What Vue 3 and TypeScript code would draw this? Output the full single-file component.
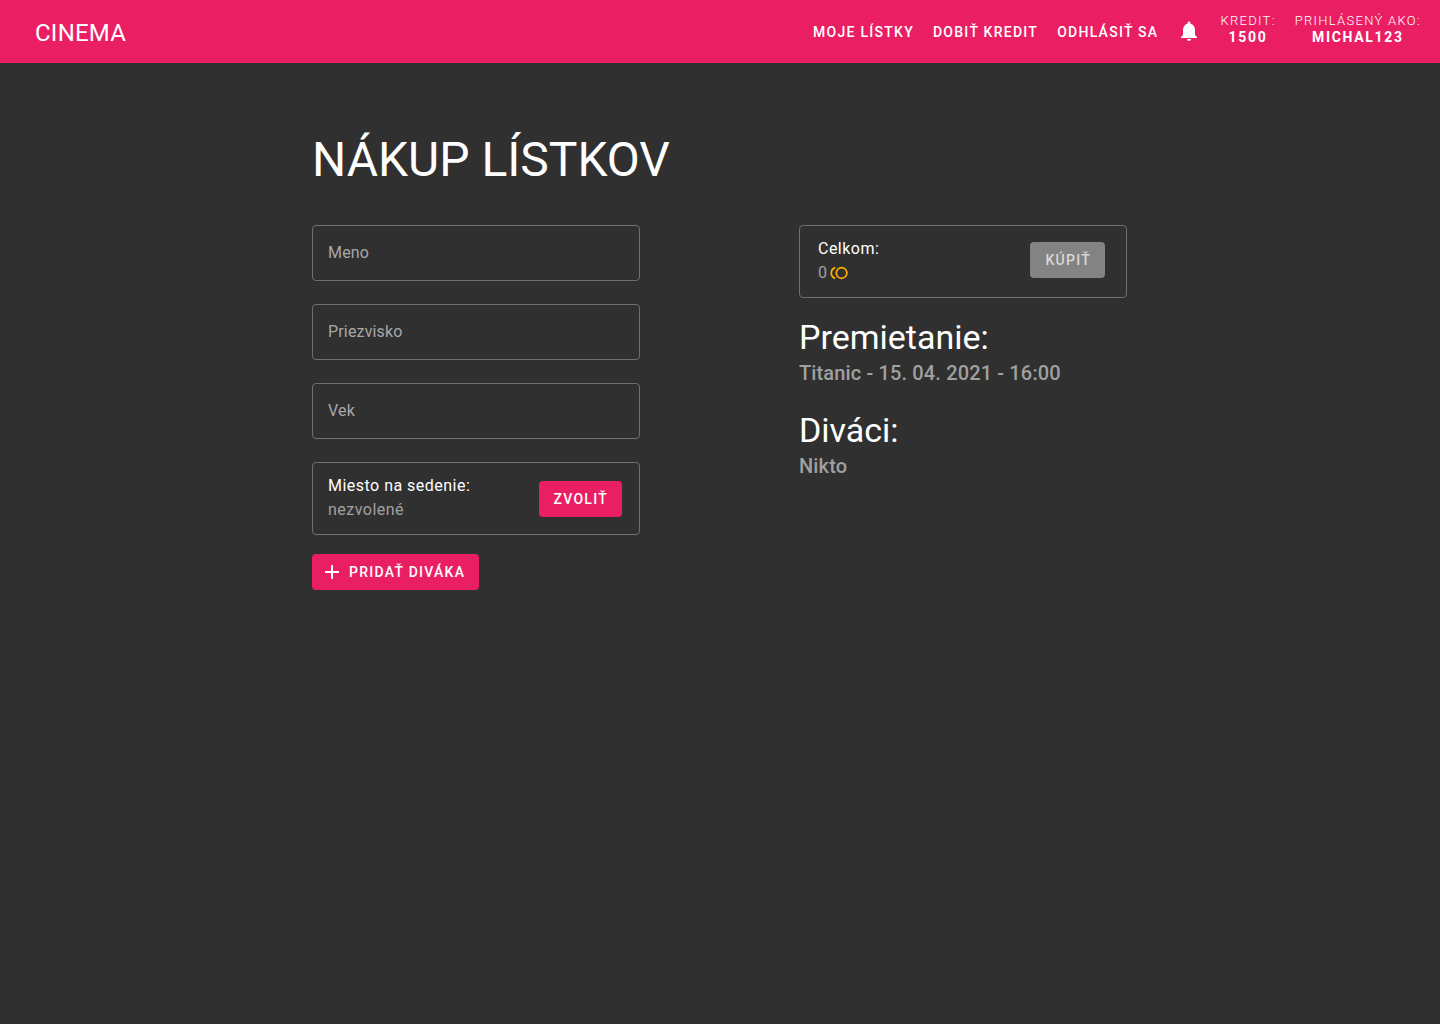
<script setup lang="ts">
import { computed, reactive, ref } from 'vue'

interface Field {
  id: 'firstName' | 'lastName' | 'age'
  label: string
}

const fields: Field[] = [
  { id: 'firstName', label: 'Meno' },
  { id: 'lastName', label: 'Priezvisko' },
  { id: 'age', label: 'Vek' },
]

const links: string[] = ['Moje lístky', 'Dobiť kredit', 'Odhlásiť sa']

const form = reactive<Record<Field['id'], string>>({ firstName: '', lastName: '', age: '' })
const viewers = ref<string[]>([])
const total = ref(0)
const viewerList = computed(() => viewers.value.join(', ') || 'Nikto')

function addViewer(): void {
  const name = `${form.firstName} ${form.lastName}`.trim()
  if (!name) return
  viewers.value.push(name)
  form.firstName = ''
  form.lastName = ''
  form.age = ''
}
</script>

<template>
  <div class="page">
    <header class="bar">
      <a class="brand" href="#">CINEMA</a>
      <nav class="nav">
        <a v-for="link in links" :key="link" class="nav-link" href="#">{{ link }}</a>
      </nav>
      <button class="bell" type="button" aria-label="Upozornenia">
        <svg viewBox="0 0 24 24" width="24" height="24" fill="currentColor" aria-hidden="true">
          <path d="M12 22c1.1 0 2-.9 2-2h-4c0 1.1.9 2 2 2zm6-6v-5c0-3.07-1.63-5.64-4.5-6.32V4c0-.83-.67-1.5-1.5-1.5s-1.5.67-1.5 1.5v.68C7.64 5.36 6 7.92 6 11v5l-2 2v1h16v-1l-2-2z" />
        </svg>
      </button>
      <dl class="account">
        <div class="stat">
          <dt>Kredit:</dt>
          <dd>1500</dd>
        </div>
        <div class="stat">
          <dt>Prihlásený ako:</dt>
          <dd>Michal123</dd>
        </div>
      </dl>
    </header>

    <main class="content">
      <h1 class="title">NÁKUP LÍSTKOV</h1>
      <div class="columns">
        <form class="form" @submit.prevent="addViewer">
          <div class="fields">
            <div v-for="field in fields" :key="field.id" class="field">
              <input :id="field.id" v-model="form[field.id]" type="text" autocomplete="off" />
              <label v-show="!form[field.id]" :for="field.id">{{ field.label }}</label>
            </div>
            <div class="card">
              <div class="card-text">
                <p class="strong">Miesto na sedenie:</p>
                <p class="muted">nezvolené</p>
              </div>
              <button class="btn" type="button">Zvoliť</button>
            </div>
          </div>
          <button class="btn btn-icon" type="submit">
            <svg viewBox="0 0 24 24" width="24" height="24" fill="currentColor" aria-hidden="true">
              <path d="M19 13h-6v6h-2v-6H5v-2h6V5h2v6h6v2z" />
            </svg>
            Pridať diváka
          </button>
        </form>

        <section class="summary">
          <div class="card card-total">
            <div class="card-text">
              <p class="strong">Celkom:</p>
              <p class="muted price">
                <span>{{ total }}</span>
                <svg class="coin" viewBox="0 0 18 14" width="18" height="14" fill="none" stroke="currentColor" aria-hidden="true">
                  <circle cx="11.6" cy="7" r="5.3" stroke-width="1.7" />
                  <path d="M5.2 1.6C2.7 2.5 1.3 4.6 1.3 7s1.4 4.5 3.900 5.400" stroke-width="1.7" />
                </svg>
              </p>
            </div>
            <button class="btn" type="button" :disabled="viewers.length === 0">Kúpiť</button>
          </div>
          <h2>Premietanie:</h2>
          <p class="detail">Titanic - 15. 04. 2021 - 16:00</p>
          <h2>Diváci:</h2>
          <p class="detail">{{ viewerList }}</p>
        </section>
      </div>
    </main>
  </div>
</template>

<style>
body {
  background: #303030;
}
</style>

<style scoped>
.page {
  min-height: 100vh;
  background: #303030;
  color: #fff;
  font-family: Roboto, "Liberation Sans", sans-serif;
  font-size: 16px;
}

h1,
h2,
p,
dl,
dd {
  margin: 0;
}

a {
  color: inherit;
  text-decoration: none;
}

.bar {
  display: flex;
  align-items: center;
  height: 63px;
  padding: 0 19px 0 35px;
  background: #e91e63;
}

.brand {
  margin-right: auto;
  padding-top: 2px;
  font-size: 24px;
  line-height: 28px;
  letter-spacing: 0.01em;
}

.nav {
  display: flex;
  gap: 19px;
}

.nav-link {
  font-size: 14px;
  font-weight: 500;
  line-height: 16px;
  letter-spacing: 0.09em;
  text-transform: uppercase;
}

.bell {
  display: flex;
  margin: 0 19px;
  padding: 0 0 2px;
  border: 0;
  background: none;
  color: #fff;
}

.account {
  display: flex;
  gap: 19px;
  padding-bottom: 5px;
}

.stat {
  line-height: 17px;
  text-align: center;
  text-transform: uppercase;
}

.stat dt {
  font-size: 13px;
  font-weight: 300;
  letter-spacing: 0.1em;
}

.stat dd {
  font-size: 14px;
  font-weight: 700;
  letter-spacing: 0.12em;
}

.content {
  max-width: 816px;
  margin: 0 auto;
  padding: 69px 24px 48px;
}

.title {
  margin-bottom: 37px;
  font-size: 48px;
  font-weight: 400;
  line-height: 56px;
}

.columns {
  display: grid;
  grid-template-columns: 328px 328px;
  gap: 32px 159px;
}

.form {
  display: flex;
  flex-direction: column;
  align-items: flex-start;
  gap: 19px;
}

.fields {
  display: flex;
  flex-direction: column;
  gap: 23px;
  width: 100%;
}

.field {
  display: grid;
  align-items: center;
}

.field input,
.field label {
  grid-area: 1 / 1;
}

.field input {
  box-sizing: border-box;
  width: 100%;
  height: 56px;
  padding: 0 15px;
  border: 1px solid #6f6f6f;
  border-radius: 4px;
  background: transparent;
  color: #fff;
  font: inherit;
}

.field label {
  padding: 0 16px;
  color: #a8a8a8;
  line-height: 24px;
  letter-spacing: 0.01em;
  pointer-events: none;
}

.card {
  display: flex;
  align-items: center;
  justify-content: space-between;
  box-sizing: border-box;
  height: 73px;
  padding: 0 17px 0 15px;
  border: 1px solid #6f6f6f;
  border-radius: 4px;
}

.card-total {
  padding: 0 21px 4px 18px;
}

.card-text {
  padding-bottom: 2px;
  line-height: 24px;
  letter-spacing: 0.03em;
}

.card-total .card-text {
  padding: 3px 0 0;
}

.strong {
  color: #fff;
}

.muted {
  color: #a0a0a0;
}

.price {
  display: flex;
  align-items: center;
  gap: 3px;
}

.coin {
  color: #ffb300;
}

.btn {
  display: flex;
  align-items: center;
  height: 36px;
  padding: 0 14px 0 15px;
  border: 0;
  border-radius: 4px;
  background: #e91e63;
  color: #fff;
  font-family: inherit;
  font-size: 14px;
  font-weight: 500;
  letter-spacing: 0.09em;
  text-transform: uppercase;
}

.btn:disabled {
  background: #838383;
  color: #d8d8d8;
}

.btn-icon {
  gap: 5px;
  padding-left: 8px;
}

.summary h2 {
  margin-top: 19px;
  font-size: 34px;
  font-weight: 400;
  line-height: 40px;
}

.detail {
  margin-top: -1px;
  padding-bottom: 1px;
  color: #a0a0a0;
  font-size: 20px;
  font-weight: 500;
  line-height: 34px;
  letter-spacing: 0.007em;
}

@media (max-width: 860px) {
  .columns {
    grid-template-columns: minmax(0, 328px);
  }
}
</style>
